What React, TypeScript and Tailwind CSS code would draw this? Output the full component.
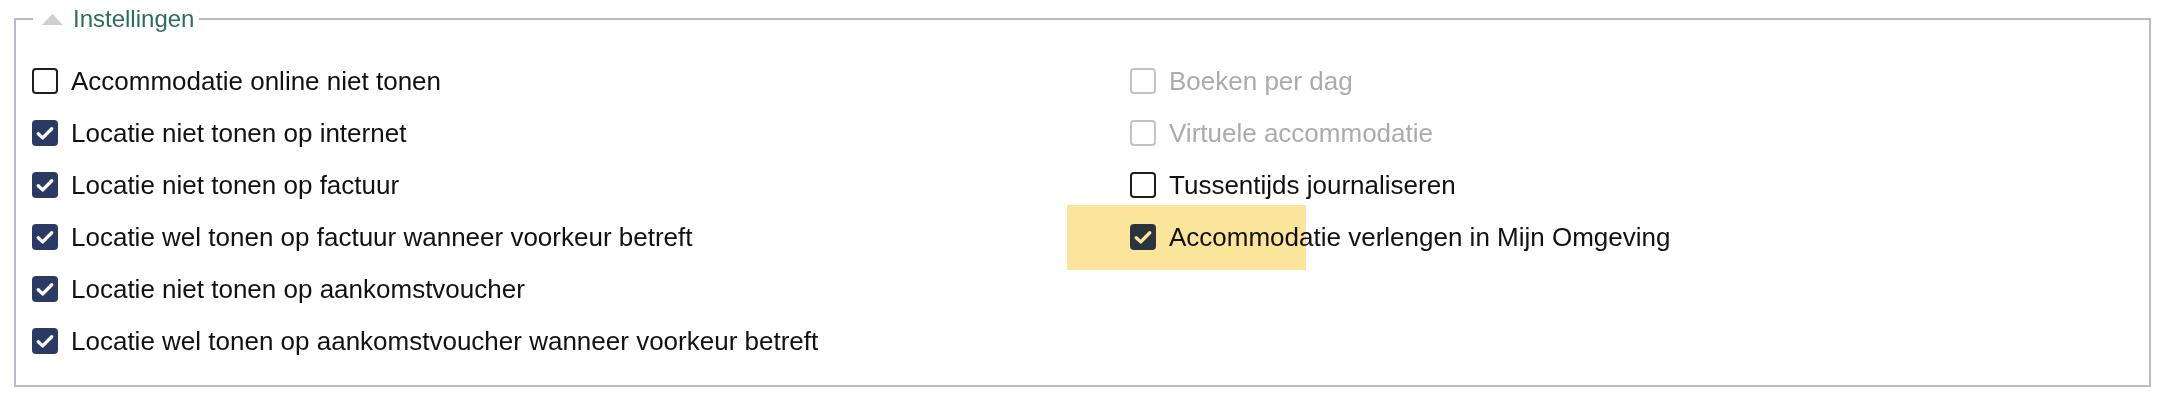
import React from "react";

type Item = { label: string; checked?: boolean; disabled?: boolean; highlight?: boolean };

const left: Item[] = [
  { label: "Accommodatie online niet tonen" },
  { label: "Locatie niet tonen op internet", checked: true },
  { label: "Locatie niet tonen op factuur", checked: true },
  { label: "Locatie wel tonen op factuur wanneer voorkeur betreft", checked: true },
  { label: "Locatie niet tonen op aankomstvoucher", checked: true },
  { label: "Locatie wel tonen op aankomstvoucher wanneer voorkeur betreft", checked: true },
];

const right: Item[] = [
  { label: "Boeken per dag", disabled: true },
  { label: "Virtuele accommodatie", disabled: true },
  { label: "Tussentijds journaliseren" },
  { label: "Accommodatie verlengen in Mijn Omgeving", checked: true, highlight: true },
];

function Box({ checked, disabled }: { checked?: boolean; disabled?: boolean }) {
  if (checked) {
    return (
      <span className="flex h-[26px] w-[26px] shrink-0 items-center justify-center rounded-[4px] bg-[#2b3a64]">
        <svg width="20" height="20" viewBox="0 0 16 16" fill="none">
          <path d="M2.6 8.6 L6.2 11.9 L13.4 4.6" stroke="#ffffff" strokeWidth="2.7" strokeLinecap="round" strokeLinejoin="round" />
        </svg>
      </span>
    );
  }
  return (
    <span
      className={
        disabled
          ? "block h-[26px] w-[26px] shrink-0 rounded-[4px] border-[2px] border-[#c4c4c4] bg-white"
          : "block h-[26px] w-[26px] shrink-0 rounded-[4px] border-[2px] border-[#1e1e1e] bg-white"
      }
    />
  );
}

function Row({ item }: { item: Item }) {
  return (
    <div className="relative flex h-[52px] items-center gap-[13px]">
      <Box checked={item.checked} disabled={item.disabled} />
      <span className={item.disabled ? "text-[#ababab]" : "text-[#111111]"}>{item.label}</span>
      {item.highlight && (
        <div className="pointer-events-none absolute left-[-63px] top-[-6px] h-[65px] w-[239px] bg-[#fbe59b] mix-blend-multiply" />
      )}
    </div>
  );
}

export default function App() {
  return (
    <div className="h-[410px] w-[2164px] bg-white" style={{ fontFamily: '"Liberation Sans", Arial, sans-serif' }}>
      <fieldset className="ml-[14px] mr-[13px] mt-[5px] border-[2px] border-[#b9bacb] px-[16px] pb-[18px] pt-[22px]">
        <legend className="ml-[1px] flex items-center gap-[10px] pl-[9px] pr-[5px] text-[24px] leading-[28px] text-[#2a6e5c]">
          <svg width="21" height="11" viewBox="0 0 21 11">
            <polygon points="10.5,0 21,11 0,11" fill="#cfcfcf" />
          </svg>
          <span>Instellingen</span>
        </legend>
        <div className="grid grid-cols-[1098px_1fr] text-[26px] leading-[30px]">
          <div className="flex flex-col">
            {left.map((it) => (
              <Row key={it.label} item={it} />
            ))}
          </div>
          <div className="flex flex-col">
            {right.map((it) => (
              <Row key={it.label} item={it} />
            ))}
          </div>
        </div>
      </fieldset>
    </div>
  );
}
